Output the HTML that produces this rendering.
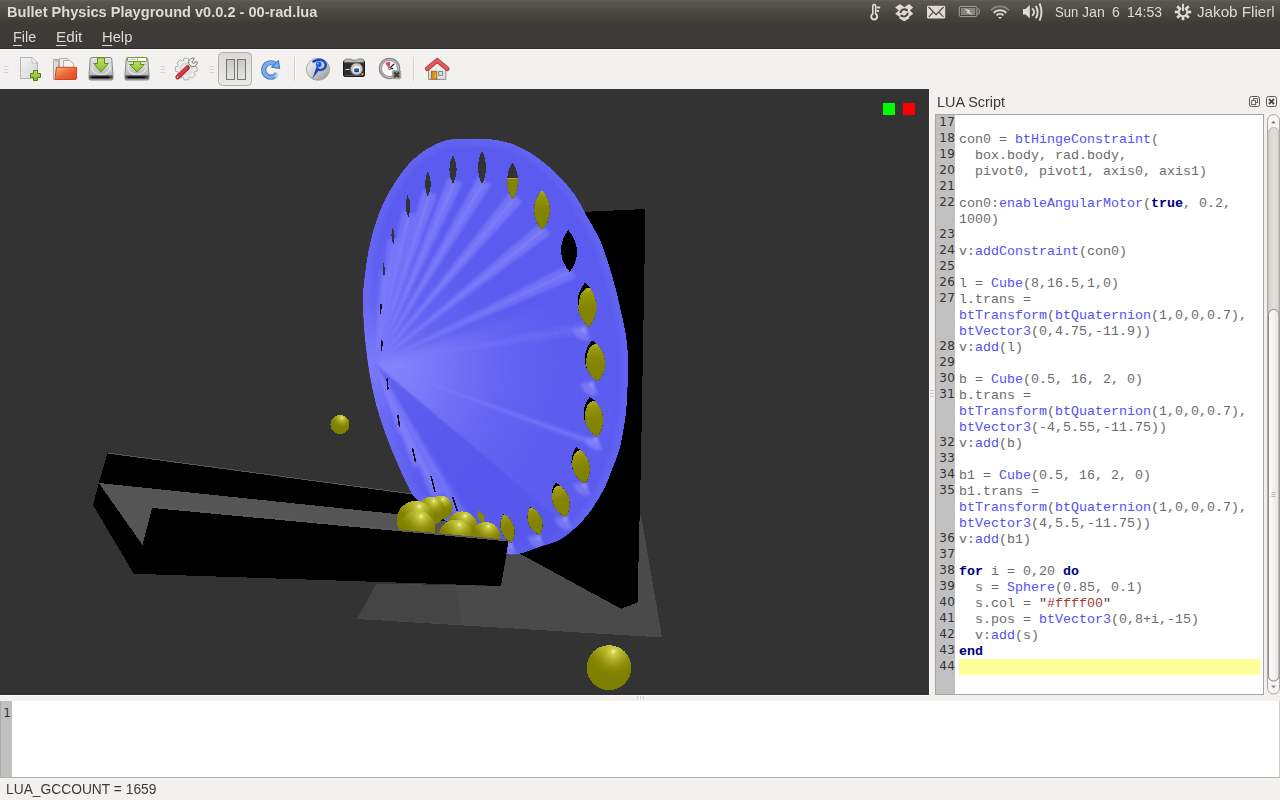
<!DOCTYPE html>
<html lang="en">
<head>
<meta charset="utf-8">
<title>Bullet Physics Playground v0.0.2 - 00-rad.lua</title>
<style>
*{box-sizing:border-box;margin:0;padding:0}
html,body{width:1280px;height:800px;overflow:hidden;background:#f2f1f0;font-family:"Liberation Sans","DejaVu Sans",sans-serif;}
.abs{position:absolute}
#titlebar{position:absolute;left:0;top:0;width:1280px;height:24px;background:linear-gradient(#646157 0px,#5a574e 1.5px,#54514a 6px,#4b4943 12px,#43423d 18px,#3d3c38 23px,#3c3b37 24px);}
#menubar{position:absolute;left:0;top:24px;width:1280px;height:25px;background:#3c3b37;}
#toolbar{position:absolute;left:0;top:48px;width:1280px;height:41px;background:linear-gradient(#2f2e2b 0,#2f2e2b 1px,#fcfcfb 1px,#fcfcfb 2px,#f2f1f0 2px);}
.ttl{position:absolute;white-space:nowrap;color:#dfdbd2;transform-origin:0 0;}
#view{position:absolute;left:0;top:89px;width:929px;height:606px;background:#333;overflow:hidden}
#dock{position:absolute;left:929px;top:89px;width:351px;height:606px;background:#f2f1f0;}
#editor{position:absolute;left:935px;top:114px;width:329px;height:581px;border:1px solid #a9a6a0;background:#fff;overflow:hidden}
#gutter{position:absolute;left:0;top:0;width:19px;height:100%;background:#c0c0c0}
#console{position:absolute;left:0;top:700px;width:1280px;height:78px;background:#fff;border-top:1px solid #f2f1f0;border-bottom:1px solid #b4b1ab;border-right:1px solid #cfccc6}
#cgutter{position:absolute;left:0;top:0;width:12px;height:76px;background:#c0c0c0;border-left:1px solid #aeaba6}
#status{position:absolute;left:0;top:778px;width:1280px;height:22px;background:#f2f1f0}

#code{position:absolute;left:0;top:0;width:327px}
.row{position:relative;height:16px;line-height:16px;white-space:pre;font-family:"Liberation Mono","DejaVu Sans Mono",monospace;font-size:13.333px;color:#6a6a6a}
.row .ln{position:absolute;left:0;top:-1px;width:19.5px;letter-spacing:0.5px;text-align:right;font-family:"DejaVu Sans","Liberation Sans",sans-serif;font-size:12px;color:#333;line-height:16px}
.row .cd{position:absolute;left:23px;top:1px}
.row.cur::after{content:"";position:absolute;left:23px;top:0;width:301px;height:16px;background:#ffff99}
.f{color:#5252f2}
.k{color:#00007f;font-weight:bold}
.s{color:#a03838}
.q{color:#444}
.tx{position:absolute;white-space:pre;transform-origin:0 0;font-family:"Liberation Sans","DejaVu Sans",sans-serif}
.tx u{text-decoration:none;border-bottom:1px solid currentColor;padding-bottom:0px}
</style>
</head>
<body>
<div id="titlebar"><!--TI--><svg id="tisvg" width="1280" height="24" viewBox="0 0 1280 24" style="position:absolute;left:0;top:0">
<path d="M872,6 a2.2,2.2 0 0 1 4.4,0 V13.2 a4,4 0 1 1 -4.4,0Z" fill="#dfdbd2"/>
<path d="M873.6,6.2 a0.6,0.6 0 0 1 1.2,0 V14.6 a2,2 0 1 1 -1.2,0Z" fill="#45443f"/>
<circle cx="874.2" cy="16.6" r="1.1" fill="#dfdbd2" opacity="0"/>
<rect x="876.6" y="6.5" width="3.6" height="1.9" fill="#dfdbd2"/><rect x="876.6" y="10" width="2.4" height="1.9" fill="#dfdbd2"/>
<path d="M899.9,4 L904.4,7.3 L909,4 L913.3,7.4 L909.8,10.5 L913.3,13.7 L909.2,16.8 V18.4 L904.2,21.2 L899.4,18.4 V16.8 L895.2,13.7 L898.8,10.5 L895.2,7.4Z" fill="#dfdbd2"/>
<path d="M900.6,13 a3.6,3.6 0 0 1 6.2,-2.6" fill="none" stroke="#45443f" stroke-width="1.9"/><path d="M907.8,8.5 l-0.2,3 l-2.8,-0.9Z" fill="#45443f"/>
<path d="M907.6,12.8 a3.6,3.6 0 0 1 -6.2,2.6" fill="none" stroke="#45443f" stroke-width="1.9"/><path d="M900.4,17.3 l0.2,-3 l2.8,0.9Z" fill="#45443f"/>
<rect x="927" y="5.8" width="18.2" height="12.6" rx="1.2" fill="#dfdbd2"/>
<path d="M928.6,7 L936.1,14.6 L943.6,7" fill="none" stroke="#45443f" stroke-width="1.1"/><path d="M928.8,17 L933.2,12.2 M943.4,17 L939,12.2" fill="none" stroke="#45443f" stroke-width="1.1"/>
<rect x="959.3" y="6.4" width="17.6" height="10.2" rx="1.5" fill="none" stroke="#a5a29a" stroke-width="1"/>
<rect x="961" y="8" width="14.2" height="7" fill="#85837c"/>
<path d="M977.4,9 h1 q0.8,0 0.8,0.8 v3.4 q0,0.8 -0.8,0.8 h-1" fill="none" stroke="#a5a29a" stroke-width="1"/>
<path d="M963.8,8.2 L970.4,10.6 L969,11.5 L973,14.8 L966.2,12.5 L967.6,11.5Z" fill="#dcd9d1"/>
<path d="M990.93,10.44 A12.2,12.2 0 0 1 1009.07,10.44" fill="none" stroke="#8d8a83" stroke-width="1.9"/>
<path d="M993.76,12.98 A8.4,8.4 0 0 1 1006.24,12.98" fill="none" stroke="#dfdbd2" stroke-width="1.9"/>
<path d="M996.51,15.46 A4.7,4.7 0 0 1 1003.49,15.46" fill="none" stroke="#dfdbd2" stroke-width="1.9"/>
<path d="M998.2,16.9 h3.6 l-1.8,2.3Z" fill="#dfdbd2"/>
<path d="M1023,9 h2.6 l4.2,-4.2 v13.8 l-4.2,-4.2 h-2.6Z" fill="#dfdbd2"/>
<path d="M1032.1999999999998,8.3 Q1036.0,12.1 1032.1999999999998,15.899999999999999" fill="none" stroke="#dfdbd2" stroke-width="1.9"/>
<path d="M1035.8,5.8999999999999995 Q1039.6000000000001,12.1 1035.8,18.3" fill="none" stroke="#dfdbd2" stroke-width="1.9"/>
<path d="M1039.6,3.5 Q1043.4,12.1 1039.6,20.7" fill="none" stroke="#dfdbd2" stroke-width="1.9"/>
<path d="M1184.77,8.19 A4.2,4.2 0 1 1 1181.23,8.19" fill="none" stroke="#dfdbd2" stroke-width="1.9"/>
<rect x="1181.65" y="3.8000000000000007" width="2.7" height="3.7" fill="#dfdbd2" transform="rotate(45 1183 12)"/>
<rect x="1181.65" y="3.8000000000000007" width="2.7" height="3.7" fill="#dfdbd2" transform="rotate(90 1183 12)"/>
<rect x="1181.65" y="3.8000000000000007" width="2.7" height="3.7" fill="#dfdbd2" transform="rotate(135 1183 12)"/>
<rect x="1181.65" y="3.8000000000000007" width="2.7" height="3.7" fill="#dfdbd2" transform="rotate(180 1183 12)"/>
<rect x="1181.65" y="3.8000000000000007" width="2.7" height="3.7" fill="#dfdbd2" transform="rotate(225 1183 12)"/>
<rect x="1181.65" y="3.8000000000000007" width="2.7" height="3.7" fill="#dfdbd2" transform="rotate(270 1183 12)"/>
<rect x="1181.65" y="3.8000000000000007" width="2.7" height="3.7" fill="#dfdbd2" transform="rotate(315 1183 12)"/>
<rect x="1182.05" y="3.8" width="1.9" height="7.4" fill="#dfdbd2"/>
</svg><!--/TI-->
</div>
<div id="menubar">
</div>
<div id="toolbar"><!--TB--><svg id="tbsvg" width="1280" height="41" viewBox="0 48 1280 41" style="position:absolute;left:0;top:0">
<defs>
<linearGradient id="gpaper" x1="0" y1="0" x2="1" y2="1"><stop offset="0" stop-color="#f4f4f4"/><stop offset="1" stop-color="#d4d4d4"/></linearGradient>
<linearGradient id="gplus" x1="0" y1="0" x2="0" y2="1"><stop offset="0" stop-color="#b5dc5a"/><stop offset="1" stop-color="#7fb421"/></linearGradient>
<linearGradient id="gfold" x1="0" y1="0" x2="1" y2="1"><stop offset="0" stop-color="#f7b27a"/><stop offset="0.5" stop-color="#ee6a3a"/><stop offset="1" stop-color="#e2411a"/></linearGradient>
<linearGradient id="gdrv" x1="0" y1="0" x2="0" y2="1"><stop offset="0" stop-color="#e4e4e4"/><stop offset="0.6" stop-color="#c6c6c6"/><stop offset="1" stop-color="#a8a8a8"/></linearGradient>
<linearGradient id="gdrvb" x1="0" y1="0" x2="0" y2="1"><stop offset="0" stop-color="#555"/><stop offset="0.45" stop-color="#3a3a3a"/><stop offset="1" stop-color="#8c8c8c"/></linearGradient>
<linearGradient id="garr" x1="0" y1="0" x2="0" y2="1"><stop offset="0" stop-color="#c3e36a"/><stop offset="1" stop-color="#86bc25"/></linearGradient>
<linearGradient id="gbtn" x1="0" y1="0" x2="0" y2="1"><stop offset="0" stop-color="#dcd9d4"/><stop offset="1" stop-color="#eceae7"/></linearGradient>
<linearGradient id="gbar" x1="0" y1="0" x2="0" y2="1"><stop offset="0" stop-color="#c4c6c0"/><stop offset="1" stop-color="#e6e7e2"/></linearGradient>
<linearGradient id="gpov" x1="0" y1="0" x2="1" y2="1"><stop offset="0" stop-color="#f4f4f4"/><stop offset="0.5" stop-color="#cfcfcf"/><stop offset="1" stop-color="#8c8c8c"/></linearGradient>
<linearGradient id="groof" x1="0" y1="0" x2="0" y2="1"><stop offset="0" stop-color="#e46a6a"/><stop offset="1" stop-color="#c22f2f"/></linearGradient>
<linearGradient id="gwr" x1="0" y1="0" x2="1" y2="1"><stop offset="0" stop-color="#ee5a5a"/><stop offset="1" stop-color="#c41e1e"/></linearGradient>
<radialGradient id="ggear" cx="0.5" cy="0.5" r="0.5"><stop offset="0" stop-color="#bdbdbd"/><stop offset="0.45" stop-color="#c8c8c8"/><stop offset="0.5" stop-color="#ececec"/><stop offset="1" stop-color="#dcdcdc"/></radialGradient>
</defs>
<rect x="4" y="66" width="4.4" height="1" fill="#d9d5cf"/><rect x="4" y="69" width="4.4" height="1" fill="#d9d5cf"/><rect x="4" y="72" width="4.4" height="1" fill="#d9d5cf"/>
<rect x="160.5" y="66" width="4.4" height="1" fill="#d9d5cf"/><rect x="160.5" y="69" width="4.4" height="1" fill="#d9d5cf"/><rect x="160.5" y="72" width="4.4" height="1" fill="#d9d5cf"/>
<rect x="209.5" y="66" width="4.4" height="1" fill="#d9d5cf"/><rect x="209.5" y="69" width="4.4" height="1" fill="#d9d5cf"/><rect x="209.5" y="72" width="4.4" height="1" fill="#d9d5cf"/>
<path d="M20.5,57.5H32L37.5,63V78.5H20.5Z" fill="url(#gpaper)" stroke="#b4b4b4" stroke-width="1"/>
<path d="M32,57.5V63H37.5Z" fill="#fafafa" stroke="#b4b4b4" stroke-width="0.8"/>
<path d="M33.5,70.5h4v3h3v4h-3v3h-4v-3h-3v-4h3Z" fill="url(#gplus)" stroke="#4f7f10" stroke-width="1" stroke-linejoin="round"/>
<path d="M53.5,59.5H58.5V79.5H53.5Z" fill="#dcdcdc" stroke="#aaa" stroke-width="1"/>
<rect x="55" y="60.3" width="3" height="1" fill="#f0a050"/>
<path d="M59.5,58.5H67L71.5,62.5V76H59.5Z" fill="#ececec" stroke="#b0b0b0" stroke-width="1"/>
<path d="M63.5,60.5H70L73.5,64V76H63.5Z" fill="#f4f4f4" stroke="#b0b0b0" stroke-width="1"/>
<path d="M56.5,67.3H76.5V78Q76.5,79.5 75,79.5H55Q55.5,74 56.5,67.3Z" fill="url(#gfold)" stroke="#d8431c" stroke-width="1" stroke-linejoin="round"/>
<path d="M92,57.5H110Q111.5,57.5 111.8,59L113,75V78.5Q113,80 111.5,80H90.5Q89,80 89,78.5V75L90.2,59Q90.5,57.5 92,57.5Z" fill="url(#gdrv)" stroke="#8c8c8c" stroke-width="1"/><ellipse cx="101" cy="68" rx="9" ry="6.5" fill="none" stroke="#e9e9e9" stroke-width="1.2" opacity="0.9"/><path d="M89.5,75.3H112.5V78.3Q112.5,79.5 111.3,79.5H90.7Q89.5,79.5 89.5,78.3Z" fill="url(#gdrvb)"/><rect x="91.8" y="76.4" width="17.6" height="1.9" rx="0.9" fill="#0a0a0a"/>
<path d="M97.5,58H104.5V63.5H108.3L101,71.8L93.7,63.5H97.5Z" fill="url(#garr)" stroke="#5b8f12" stroke-width="1" stroke-linejoin="round"/>
<path d="M128,57.5H146Q147.5,57.5 147.8,59L149,75V78.5Q149,80 147.5,80H126.5Q125,80 125,78.5V75L126.2,59Q126.5,57.5 128,57.5Z" fill="url(#gdrv)" stroke="#8c8c8c" stroke-width="1"/><ellipse cx="137" cy="68" rx="9" ry="6.5" fill="none" stroke="#e9e9e9" stroke-width="1.2" opacity="0.9"/><path d="M125.5,75.3H148.5V78.3Q148.5,79.5 147.3,79.5H126.7Q125.5,79.5 125.5,78.3Z" fill="url(#gdrvb)"/><rect x="127.8" y="76.4" width="17.6" height="1.9" rx="0.9" fill="#0a0a0a"/>
<path d="M133.5,61H140.5V64.5H144.3L137,71.8L129.7,64.5H133.5Z" fill="url(#garr)" stroke="#5b8f12" stroke-width="1" stroke-linejoin="round"/>
<rect x="127.5" y="57.5" width="19" height="4" rx="1" fill="#fff" stroke="#6a9c1c" stroke-width="1"/>
<rect x="129.5" y="59" width="6" height="1" fill="#bbb"/><rect x="137" y="58.5" width="1" height="2" fill="#888"/>
<polygon points="197.0,66.8 197.0,71.2 194.4,71.8 194.0,72.8 195.4,75.1 192.3,78.2 190.0,76.8 189.0,77.2 188.4,79.8 184.0,79.8 183.4,77.2 182.4,76.8 180.1,78.2 177.0,75.1 178.4,72.8 178.0,71.8 175.4,71.2 175.4,66.8 178.0,66.2 178.4,65.2 177.0,62.9 180.1,59.8 182.4,61.2 183.4,60.8 184.0,58.2 188.4,58.2 189.0,60.8 190.0,61.2 192.3,59.8 195.4,62.9 194.0,65.2 194.4,66.2" fill="#eeeeee" stroke="#a9a9a9" stroke-width="0.9" stroke-linejoin="round"/>
<circle cx="186.2" cy="69" r="6.2" fill="#e2e2e4" stroke="#cfcfcf" stroke-width="0.8"/><circle cx="186.2" cy="69" r="3.4" fill="#f2f2f2" stroke="#d6d6d6" stroke-width="0.6"/>
<path d="M187.4,67.8 L190.8,64.5" stroke="#7e7e7e" stroke-width="2.8"/><path d="M187.4,67.8 L190.8,64.5" stroke="#ececec" stroke-width="1.5"/>
<path d="M3.52,-2.47 A4.3,4.3 0 1 0 3.52,2.47 L3.3,1.5 L0.8,1.5 A1.5,1.5 0 0 1 0.8,-1.5 L3.3,-1.5 Z" fill="#f1f1f1" stroke="#757575" stroke-width="0.9" stroke-linejoin="round" transform="translate(193,62.3) rotate(-42)"/>
<path d="M177.7,77.1 L187.4,67.8" stroke="#a31a26" stroke-width="4.6" stroke-linecap="round"/>
<path d="M177.6,76.9 L187.2,67.7" stroke="#e03c3c" stroke-width="2.8" stroke-linecap="round"/>
<circle cx="177.5" cy="77.3" r="0.7" fill="#fbeaea"/>
<rect x="218.5" y="52.5" width="33" height="33" rx="4" fill="url(#gbtn)" stroke="#b3afa8" stroke-width="1"/>
<rect x="226.5" y="59.5" width="8" height="20" fill="url(#gbar)" stroke="#767672" stroke-width="1"/>
<rect x="237.5" y="59.5" width="8" height="20" fill="url(#gbar)" stroke="#767672" stroke-width="1"/>
<defs><radialGradient id="gfade" gradientUnits="userSpaceOnUse" cx="281.5" cy="77.5" r="7.5"><stop offset="0" stop-color="#000"/><stop offset="0.45" stop-color="#000"/><stop offset="1" stop-color="#fff"/></radialGradient><mask id="mfade" maskUnits="userSpaceOnUse" x="255" y="55" width="30" height="30"><rect x="255" y="55" width="30" height="30" fill="url(#gfade)"/></mask></defs>
<g mask="url(#mfade)"><path d="M275.6,64.5 A7.2,7.2 0 1 0 277.2,73.4" fill="none" stroke="#4180c9" stroke-width="5.2"/>
<path d="M275.6,64.5 A7.2,7.2 0 1 0 277.2,73.4" fill="none" stroke="#8ab5ea" stroke-width="3"/>
<path d="M275.6,64.5 A7.2,7.2 0 1 0 277.2,73.4" fill="none" stroke="#6fa2e0" stroke-width="1"/></g>
<path d="M278.4,60.6 L279.6,68.4 L271.6,67.2 Z" fill="#7dade6" stroke="#3f7fc8" stroke-width="1.2" stroke-linejoin="round"/>
<rect x="294.0" y="57" width="1" height="24" fill="#d3cfc9"/><rect x="295.0" y="57" width="1" height="24" fill="#fbfaf9"/>
<rect x="413.0" y="57" width="1" height="24" fill="#d3cfc9"/><rect x="414.0" y="57" width="1" height="24" fill="#fbfaf9"/>
<ellipse cx="318" cy="69.3" rx="11.6" ry="11" fill="url(#gpov)" stroke="#9a9a9a" stroke-width="0.8"/>
<path d="M313.4,61.6 Q319.5,58 324,61.4 Q327.4,65 324.4,68.4 Q321.5,70.8 318.2,69.6" fill="none" stroke="#164bc0" stroke-width="2.4" stroke-linecap="round"/>
<path d="M316.6,66.6 L319.8,69.2 L312.2,79 Z" fill="#164bc0"/>
<circle cx="318.7" cy="64.4" r="2.8" fill="#1c5ae0"/><circle cx="317.9" cy="63.5" r="1" fill="#86aef8"/>
<rect x="343.5" y="60.5" width="21" height="16" rx="1.5" fill="#2e2e2e" stroke="#1a1a1a" stroke-width="1"/>
<path d="M344,60.5 L346,59 H351 L352,60 H357 L358,59 H363 L364,60.5 V62.5 H344Z" fill="#b8b8b8" stroke="#555" stroke-width="0.6"/>
<rect x="345.5" y="69" width="4" height="1" fill="#ddd"/><rect x="345" y="75" width="18" height="1" fill="#555"/>
<circle cx="356.6" cy="69" r="6" fill="#c9c9c9" stroke="#777" stroke-width="0.8"/><circle cx="356.6" cy="69.6" r="3.8" fill="#eee"/><rect x="354.3" y="68.6" width="4.6" height="3.6" rx="1" fill="#0e2f86"/><rect x="355.3" y="69.3" width="2.4" height="1.6" fill="#3f7ae0"/>
<rect x="361.5" y="73" width="2" height="2" fill="#f0a020"/>
<circle cx="389.5" cy="68.4" r="10" fill="#ececec" stroke="#8a8a8a" stroke-width="1.5"/>
<circle cx="389.5" cy="68.4" r="8.2" fill="#fdfdfd" stroke="#9e9e9e" stroke-width="1.4"/>
<path d="M389.5,68.4 L385.2,63.4 A6.6,6.6 0 0 1 390.2,61.9Z" fill="#f0445a"/>
<path d="M389.5,68.4 L393.8,64.3" stroke="#222" stroke-width="1.3" stroke-linecap="round"/><path d="M389.5,68.4 L392.6,68.5" stroke="#222" stroke-width="1.3" stroke-linecap="round"/><circle cx="389.5" cy="68.4" r="1.2" fill="#ddd" stroke="#444" stroke-width="0.7"/>
<rect x="392.4" y="70.6" width="8.4" height="8.2" rx="1" fill="#8c8c88" stroke="#a8a8a4" stroke-width="0.8"/>
<path d="M394.3,72.5 L398.9,77 M398.9,72.5 L394.3,77" stroke="#3c3c3a" stroke-width="2"/>
<defs><linearGradient id="gwall" x1="0" y1="0" x2="0" y2="1"><stop offset="0" stop-color="#fafafa"/><stop offset="1" stop-color="#dcdcda"/></linearGradient><linearGradient id="gdoor" x1="0" y1="0" x2="1" y2="0"><stop offset="0" stop-color="#c98a1c"/><stop offset="1" stop-color="#e2a634"/></linearGradient></defs>
<path d="M428.6,79.4 V66.8 L437.2,58.6 L445.8,66.8 V79.4Z" fill="url(#gwall)" stroke="#8a8a88" stroke-width="1"/>
<path d="M427.2,68.8 L437.2,60.4 L447.2,68.8" fill="none" stroke="#b93434" stroke-width="4.6" stroke-linecap="round" stroke-linejoin="miter"/>
<path d="M427.3,68.6 L437.2,60.3 L447.1,68.6" fill="none" stroke="#d96060" stroke-width="2.8" stroke-linecap="round" stroke-linejoin="miter"/>
<rect x="431.4" y="71.3" width="5.4" height="7.8" fill="url(#gdoor)" stroke="#a36c10" stroke-width="0.9"/><circle cx="435.6" cy="76.6" r="0.5" fill="#ffe680"/>
<rect x="438.7" y="71.5" width="3.8" height="3.8" fill="#cfe5ec" stroke="#858583" stroke-width="1"/>
</svg><!--/TB--></div>
<div id="view"><!--SCENE--><svg id="scene" width="929" height="606" viewBox="0 89 929 606" style="position:absolute;left:0;top:0" shape-rendering="crispEdges">
<defs>
<radialGradient id="gball" cx="0.6" cy="0.14" r="0.62"><stop offset="0" stop-color="#ffffe6"/><stop offset="0.05" stop-color="#fafaa0"/><stop offset="0.11" stop-color="#d6d64e"/><stop offset="0.3" stop-color="#b0b02a"/><stop offset="0.55" stop-color="#92920e"/><stop offset="0.78" stop-color="#828200"/><stop offset="1" stop-color="#808000"/></radialGradient>
<linearGradient id="gyb" x1="0" y1="0" x2="0" y2="1"><stop offset="0" stop-color="#b0b024"/><stop offset="0.12" stop-color="#96960c"/><stop offset="0.4" stop-color="#848402"/><stop offset="1" stop-color="#808000"/></linearGradient>
<linearGradient id="gballtop" x1="0" y1="0" x2="0" y2="1"><stop offset="0" stop-color="#c8c840" stop-opacity="0.55"/><stop offset="0.32" stop-color="#a0a020" stop-opacity="0"/></linearGradient>
<radialGradient id="gwedge" gradientUnits="userSpaceOnUse" cx="375" cy="364" r="275"><stop offset="0" stop-color="#8a8afe" stop-opacity="0.95"/><stop offset="0.2" stop-color="#7e7efb" stop-opacity="0.8"/><stop offset="0.45" stop-color="#7070f7" stop-opacity="0.45"/><stop offset="0.75" stop-color="#6464f2" stop-opacity="0.1"/><stop offset="1" stop-color="#6060f0" stop-opacity="0"/></radialGradient>
<radialGradient id="gfan" gradientUnits="userSpaceOnUse" cx="375" cy="364" r="150"><stop offset="0" stop-color="#8a8aff" stop-opacity="0.8"/><stop offset="0.4" stop-color="#7878fa" stop-opacity="0.35"/><stop offset="1" stop-color="#6868f4" stop-opacity="0"/></radialGradient>
<clipPath id="cdisc"><path d="M470.0,139.0C477.5,138.9 485.0,138.5 492.5,139.5C500.0,140.5 507.5,142.0 515.0,145.0C522.5,148.0 530.4,152.5 537.5,157.5C544.6,162.5 551.2,168.8 557.5,175.0C563.8,181.2 570.0,187.9 575.0,195.0C580.0,202.1 583.3,210.0 587.5,217.5C591.7,225.0 596.5,232.1 600.0,240.0C603.5,247.9 606.1,256.7 608.8,265.0C611.4,273.3 614.0,282.2 616.0,290.0C618.0,297.8 619.5,305.3 621.0,312.0C622.5,318.7 623.9,323.7 625.0,330.0C626.1,336.3 627.0,343.3 627.5,350.0C628.0,356.7 628.0,363.8 628.0,370.0C628.0,376.2 627.8,380.4 627.5,387.5C627.2,394.6 626.7,405.4 626.0,412.5C625.3,419.6 624.2,424.6 623.3,430.0C622.4,435.4 621.6,440.3 620.5,445.0C619.4,449.7 618.0,453.7 616.5,458.0C615.0,462.3 613.4,465.9 611.5,470.7C609.6,475.5 608.0,481.1 605.0,487.0C602.0,492.9 597.8,500.4 593.7,506.4C589.7,512.4 586.1,517.3 580.7,522.7C575.3,528.1 567.9,535.0 561.1,539.0C554.3,543.0 546.9,544.2 540.0,546.6C533.1,549.0 525.8,552.4 520.0,553.5C514.2,554.6 511.7,554.9 505.0,553.5C498.3,552.1 488.3,549.2 480.0,545.0C471.7,540.8 463.0,533.8 455.0,528.0C447.0,522.2 438.7,515.1 432.0,510.0C425.3,504.9 419.1,501.7 415.0,497.5C410.9,493.3 410.5,491.2 407.3,485.0C404.1,478.8 399.6,468.3 396.0,460.0C392.4,451.7 389.3,444.2 386.0,435.0C382.7,425.8 379.1,415.4 376.3,405.0C373.6,394.6 371.4,383.8 369.5,372.5C367.6,361.2 366.1,349.6 365.0,337.5C363.9,325.4 363.0,310.4 363.0,300.0C363.0,289.6 364.0,283.3 365.0,275.0C366.0,266.7 367.1,258.3 368.8,250.0C370.4,241.7 372.5,232.9 375.0,225.0C377.5,217.1 380.4,209.6 383.8,202.5C387.1,195.4 390.6,189.2 395.0,182.5C399.4,175.8 404.6,168.1 410.0,162.5C415.4,156.9 421.2,152.5 427.5,148.8C433.8,145.0 440.4,141.6 447.5,140.0C454.6,138.4 462.5,139.1 470.0,139.0Z"/></clipPath>
<filter id="b1" x="-30%" y="-30%" width="160%" height="160%"><feGaussianBlur stdDeviation="1"/></filter>
<filter id="b15" x="-30%" y="-30%" width="160%" height="160%"><feGaussianBlur stdDeviation="1.6"/></filter>
<filter id="b2" x="-30%" y="-30%" width="160%" height="160%"><feGaussianBlur stdDeviation="2.2"/></filter>
<filter id="b4" x="-30%" y="-30%" width="160%" height="160%"><feGaussianBlur stdDeviation="4"/></filter>
<clipPath id="ch0"><path transform="translate(383.75,270) rotate(-3)" d="M0,-7.0A22.8,22.8 0 0 1 0,7.0A22.8,22.8 0 0 1 0,-7.0Z"/></clipPath>
<clipPath id="ch1"><path transform="translate(393,236) rotate(-3)" d="M0,-8.5A24.8,24.8 0 0 1 0,8.5A24.8,24.8 0 0 1 0,-8.5Z"/></clipPath>
<clipPath id="ch2"><path transform="translate(408,206) rotate(-2)" d="M0,-11.0A28.0,28.0 0 0 1 0,11.0A28.0,28.0 0 0 1 0,-11.0Z"/></clipPath>
<clipPath id="ch3"><path transform="translate(428,184) rotate(0)" d="M0,-13.0A32.1,32.1 0 0 1 0,13.0A32.1,32.1 0 0 1 0,-13.0Z"/></clipPath>
<clipPath id="ch4"><path transform="translate(453,169.5) rotate(0)" d="M0,-14.5A31.8,31.8 0 0 1 0,14.5A31.8,31.8 0 0 1 0,-14.5Z"/></clipPath>
<clipPath id="ch5"><path transform="translate(482,167.5) rotate(0)" d="M0,-16.5A36.0,36.0 0 0 1 0,16.5A36.0,36.0 0 0 1 0,-16.5Z"/></clipPath>
<clipPath id="ch6"><path transform="translate(512.5,181) rotate(0)" d="M0,-18.5A33.9,33.9 0 0 1 0,18.5A33.9,33.9 0 0 1 0,-18.5Z"/></clipPath>
<clipPath id="ch7"><path transform="translate(542,210) rotate(0)" d="M0,-20.0A29.0,29.0 0 0 1 0,20.0A29.0,29.0 0 0 1 0,-20.0Z"/></clipPath>
<clipPath id="ch8"><path transform="translate(569,251) rotate(-2)" d="M0,-21.0A31.6,31.6 0 0 1 0,21.0A31.6,31.6 0 0 1 0,-21.0Z"/></clipPath>
<clipPath id="ch9"><path transform="translate(587,305) rotate(-5)" d="M0,-22.5A31.4,31.4 0 0 1 0,22.5A31.4,31.4 0 0 1 0,-22.5Z"/></clipPath>
<clipPath id="ch10"><path transform="translate(595,361) rotate(-8)" d="M0,-21.0A27.1,27.1 0 0 1 0,21.0A27.1,27.1 0 0 1 0,-21.0Z"/></clipPath>
<clipPath id="ch11"><path transform="translate(593.5,417) rotate(-11)" d="M0,-20.5A26.9,26.9 0 0 1 0,20.5A26.9,26.9 0 0 1 0,-20.5Z"/></clipPath>
<clipPath id="ch12"><path transform="translate(580.7,465.5) rotate(-14)" d="M0,-18.8A24.5,24.5 0 0 1 0,18.8A24.5,24.5 0 0 1 0,-18.8Z"/></clipPath>
<clipPath id="ch13"><path transform="translate(560.7,500) rotate(-17)" d="M0,-18.0A23.3,23.3 0 0 1 0,18.0A23.3,23.3 0 0 1 0,-18.0Z"/></clipPath>
<clipPath id="ch14"><path transform="translate(535,521) rotate(-18)" d="M0,-15.0A19.6,19.6 0 0 1 0,15.0A19.6,19.6 0 0 1 0,-15.0Z"/></clipPath>
<clipPath id="ch15"><path transform="translate(507.5,528.5) rotate(-15)" d="M0,-15.0A20.0,20.0 0 0 1 0,15.0A20.0,20.0 0 0 1 0,-15.0Z"/></clipPath>
</defs>
<polygon points="357,619 376.4,583.6 501,586 508,548 520,553.75 641,515 662,637.5" fill="#4a4a4a"/>
<polygon points="357,619 376.4,583.6 455,586 462.5,624.5" fill="#454545"/>
<polygon points="560,213 645.5,209 641,460 637.5,602.5 621,608.75 520,553.75 500,400" fill="#000"/>
<polygon points="107.5,453 440,497.5 508.75,540 501,586 133.75,573.75 93,505 98.75,483" fill="#000"/>
<polyline points="107.5,453 420,495" fill="none" stroke="#585858" stroke-width="1"/>
<polygon points="98.75,483 420,516.5 500,532 508.75,540 152.5,506.25 142.5,545" fill="#555"/>
<path d="M470.0,139.0C477.5,138.9 485.0,138.5 492.5,139.5C500.0,140.5 507.5,142.0 515.0,145.0C522.5,148.0 530.4,152.5 537.5,157.5C544.6,162.5 551.2,168.8 557.5,175.0C563.8,181.2 570.0,187.9 575.0,195.0C580.0,202.1 583.3,210.0 587.5,217.5C591.7,225.0 596.5,232.1 600.0,240.0C603.5,247.9 606.1,256.7 608.8,265.0C611.4,273.3 614.0,282.2 616.0,290.0C618.0,297.8 619.5,305.3 621.0,312.0C622.5,318.7 623.9,323.7 625.0,330.0C626.1,336.3 627.0,343.3 627.5,350.0C628.0,356.7 628.0,363.8 628.0,370.0C628.0,376.2 627.8,380.4 627.5,387.5C627.2,394.6 626.7,405.4 626.0,412.5C625.3,419.6 624.2,424.6 623.3,430.0C622.4,435.4 621.6,440.3 620.5,445.0C619.4,449.7 618.0,453.7 616.5,458.0C615.0,462.3 613.4,465.9 611.5,470.7C609.6,475.5 608.0,481.1 605.0,487.0C602.0,492.9 597.8,500.4 593.7,506.4C589.7,512.4 586.1,517.3 580.7,522.7C575.3,528.1 567.9,535.0 561.1,539.0C554.3,543.0 546.9,544.2 540.0,546.6C533.1,549.0 525.8,552.4 520.0,553.5C514.2,554.6 511.7,554.9 505.0,553.5C498.3,552.1 488.3,549.2 480.0,545.0C471.7,540.8 463.0,533.8 455.0,528.0C447.0,522.2 438.7,515.1 432.0,510.0C425.3,504.9 419.1,501.7 415.0,497.5C410.9,493.3 410.5,491.2 407.3,485.0C404.1,478.8 399.6,468.3 396.0,460.0C392.4,451.7 389.3,444.2 386.0,435.0C382.7,425.8 379.1,415.4 376.3,405.0C373.6,394.6 371.4,383.8 369.5,372.5C367.6,361.2 366.1,349.6 365.0,337.5C363.9,325.4 363.0,310.4 363.0,300.0C363.0,289.6 364.0,283.3 365.0,275.0C366.0,266.7 367.1,258.3 368.8,250.0C370.4,241.7 372.5,232.9 375.0,225.0C377.5,217.1 380.4,209.6 383.8,202.5C387.1,195.4 390.6,189.2 395.0,182.5C399.4,175.8 404.6,168.1 410.0,162.5C415.4,156.9 421.2,152.5 427.5,148.8C433.8,145.0 440.4,141.6 447.5,140.0C454.6,138.4 462.5,139.1 470.0,139.0Z" fill="#5b5bef"/>
<g clip-path="url(#cdisc)" shape-rendering="auto">
<circle cx="375" cy="364" r="150" fill="url(#gfan)"/>
<clipPath id="chalf"><polygon points="352.0,344.7 696.7,634.0 760,100 250,100"/></clipPath>
<g clip-path="url(#chalf)"><polygon points="375.0,364.0 630.3,276.1 658.4,334.2 655.7,413.5 633.3,484.4 593.3,547.2 565.7,575.8" fill="url(#gwedge)" filter="url(#b4)"/></g>
<path d="M470.0,139.0C477.5,138.9 485.0,138.5 492.5,139.5C500.0,140.5 507.5,142.0 515.0,145.0C522.5,148.0 530.4,152.5 537.5,157.5C544.6,162.5 551.2,168.8 557.5,175.0C563.8,181.2 570.0,187.9 575.0,195.0C580.0,202.1 583.3,210.0 587.5,217.5C591.7,225.0 596.5,232.1 600.0,240.0C603.5,247.9 606.1,256.7 608.8,265.0C611.4,273.3 614.0,282.2 616.0,290.0C618.0,297.8 619.5,305.3 621.0,312.0C622.5,318.7 623.9,323.7 625.0,330.0C626.1,336.3 627.0,343.3 627.5,350.0C628.0,356.7 628.0,363.8 628.0,370.0C628.0,376.2 627.8,380.4 627.5,387.5C627.2,394.6 626.7,405.4 626.0,412.5C625.3,419.6 624.2,424.6 623.3,430.0C622.4,435.4 621.6,440.3 620.5,445.0C619.4,449.7 618.0,453.7 616.5,458.0C615.0,462.3 613.4,465.9 611.5,470.7C609.6,475.5 608.0,481.1 605.0,487.0C602.0,492.9 597.8,500.4 593.7,506.4C589.7,512.4 586.1,517.3 580.7,522.7C575.3,528.1 567.9,535.0 561.1,539.0C554.3,543.0 546.9,544.2 540.0,546.6C533.1,549.0 525.8,552.4 520.0,553.5C514.2,554.6 511.7,554.9 505.0,553.5C498.3,552.1 488.3,549.2 480.0,545.0C471.7,540.8 463.0,533.8 455.0,528.0C447.0,522.2 438.7,515.1 432.0,510.0C425.3,504.9 419.1,501.7 415.0,497.5C410.9,493.3 410.5,491.2 407.3,485.0C404.1,478.8 399.6,468.3 396.0,460.0C392.4,451.7 389.3,444.2 386.0,435.0C382.7,425.8 379.1,415.4 376.3,405.0C373.6,394.6 371.4,383.8 369.5,372.5C367.6,361.2 366.1,349.6 365.0,337.5C363.9,325.4 363.0,310.4 363.0,300.0C363.0,289.6 364.0,283.3 365.0,275.0C366.0,266.7 367.1,258.3 368.8,250.0C370.4,241.7 372.5,232.9 375.0,225.0C377.5,217.1 380.4,209.6 383.8,202.5C387.1,195.4 390.6,189.2 395.0,182.5C399.4,175.8 404.6,168.1 410.0,162.5C415.4,156.9 421.2,152.5 427.5,148.8C433.8,145.0 440.4,141.6 447.5,140.0C454.6,138.4 462.5,139.1 470.0,139.0Z" fill="none" stroke="#7272f8" stroke-width="14" opacity="0.35" filter="url(#b2)"/>
<polygon points="375.0,364.0 584.1,542.6 549.0,557.2 497.5,552.7" fill="#5555ec" opacity="0.6" filter="url(#b1)"/>
<polygon points="375,364 390.0,271.6 379.1,270.5" fill="#8080fd" opacity="0.44" filter="url(#b15)"/>
<polygon points="375,364 385.1,276.1 382.9,275.9" fill="#9c9cff" opacity="0.28" filter="url(#b1)"/>
<polygon points="375,364 401.2,240.1 387.3,238.0" fill="#8080fd" opacity="0.52" filter="url(#b15)"/>
<polygon points="375,364 394.6,244.2 392.4,243.8" fill="#9c9cff" opacity="0.33" filter="url(#b1)"/>
<polygon points="375,364 417.3,213.9 401.9,210.4" fill="#8080fd" opacity="0.60" filter="url(#b15)"/>
<polygon points="375,364 409.6,217.2 407.4,216.8" fill="#9c9cff" opacity="0.38" filter="url(#b1)"/>
<polygon points="375,364 437.5,194.6 422.5,189.8" fill="#8080fd" opacity="0.64" filter="url(#b15)"/>
<polygon points="375,364 429.5,197.3 427.5,196.7" fill="#9c9cff" opacity="0.40" filter="url(#b1)"/>
<polygon points="375,364 462.7,183.1 448.3,176.8" fill="#8080fd" opacity="0.68" filter="url(#b15)"/>
<polygon points="375,364 454.5,184.9 452.5,184.1" fill="#9c9cff" opacity="0.42" filter="url(#b1)"/>
<polygon points="375,364 491.3,184.7 477.8,176.7" fill="#8080fd" opacity="0.68" filter="url(#b15)"/>
<polygon points="375,364 482.9,185.6 481.1,184.4" fill="#9c9cff" opacity="0.42" filter="url(#b1)"/>
<polygon points="375,364 522.2,201.8 510.2,191.6" fill="#8080fd" opacity="0.68" filter="url(#b15)"/>
<polygon points="375,364 513.8,201.2 512.2,199.8" fill="#9c9cff" opacity="0.42" filter="url(#b1)"/>
<polygon points="375,364 550.8,234.0 541.0,221.7" fill="#8080fd" opacity="0.64" filter="url(#b15)"/>
<polygon points="375,364 542.7,231.9 541.3,230.1" fill="#9c9cff" opacity="0.40" filter="url(#b1)"/>
<polygon points="375,364 575.9,278.0 569.2,263.7" fill="#8080fd" opacity="0.56" filter="url(#b15)"/>
<polygon points="375,364 568.5,274.0 567.5,272.0" fill="#9c9cff" opacity="0.35" filter="url(#b1)"/>
<polygon points="375,364 590.0,333.4 587.9,320.9" fill="#8080fd" opacity="0.24" filter="url(#b15)"/>
<polygon points="375,364 584.2,329.1 583.8,326.9" fill="#9c9cff" opacity="0.15" filter="url(#b1)"/>
<polygon points="375,364 594.4,447.4 597.0,440.0" fill="#8080fd" opacity="0.40" filter="url(#b15)"/>
<polygon points="375,364 590.6,443.0 591.4,441.0" fill="#9c9cff" opacity="0.25" filter="url(#b1)"/>
<polygon points="375,364 388.1,397.5 392.1,395.6" fill="#8080fd" opacity="0.36" filter="url(#b15)"/>
<polygon points="375,364 387.0,392.5 389.0,391.5" fill="#9c9cff" opacity="0.23" filter="url(#b1)"/>
<polygon points="375,364 398.4,434.0 405.2,431.3" fill="#8080fd" opacity="0.48" filter="url(#b15)"/>
<polygon points="375,364 399.0,428.4 401.0,427.6" fill="#9c9cff" opacity="0.30" filter="url(#b1)"/>
<polygon points="375,364 413.3,468.6 422.6,464.7" fill="#8080fd" opacity="0.60" filter="url(#b15)"/>
<polygon points="375,364 415.0,462.4 417.0,461.6" fill="#9c9cff" opacity="0.38" filter="url(#b1)"/>
<polygon points="375,364 432.5,499.2 443.8,493.8" fill="#8080fd" opacity="0.64" filter="url(#b15)"/>
<polygon points="375,364 435.0,492.5 437.0,491.5" fill="#9c9cff" opacity="0.40" filter="url(#b1)"/>
<polygon points="375,364 455.0,519.4 465.9,513.3" fill="#8080fd" opacity="0.48" filter="url(#b15)"/>
<polygon points="375,364 457.0,512.5 459.0,511.5" fill="#9c9cff" opacity="0.30" filter="url(#b1)"/>
<polygon points="585,326.5 572,328.5 576,336.5 583,340.5 590,339.5" fill="#9292ff" opacity="0.5" filter="url(#b15)"/>
<polygon points="585,325.5 580,330.5 586,334.5" fill="#a0a0ff" opacity="0.55" filter="url(#b1)"/>
<polygon points="593,381.5 580,383.5 584,391.5 591,395.5 598,394.5" fill="#9292ff" opacity="0.5" filter="url(#b15)"/>
<polygon points="593,380.5 588,385.5 594,389.5" fill="#a0a0ff" opacity="0.55" filter="url(#b1)"/>
<polygon points="597.5,436.5 584.5,438.5 588.5,446.5 595.5,450.5 602.5,449.5" fill="#9292ff" opacity="0.5" filter="url(#b15)"/>
<polygon points="597.5,435.5 592.5,440.5 598.5,444.5" fill="#a0a0ff" opacity="0.55" filter="url(#b1)"/>
<polygon points="586,482 573,484 577,492 584,496 591,495" fill="#9292ff" opacity="0.5" filter="url(#b15)"/>
<polygon points="586,481 581,486 587,490" fill="#a0a0ff" opacity="0.55" filter="url(#b1)"/>
<polygon points="567,516 554,518 558,526 565,530 572,529" fill="#9292ff" opacity="0.5" filter="url(#b15)"/>
<polygon points="567,515 562,520 568,524" fill="#a0a0ff" opacity="0.55" filter="url(#b1)"/>
<polygon points="540,534.5 527,536.5 531,544.5 538,548.5 545,547.5" fill="#9292ff" opacity="0.5" filter="url(#b15)"/>
<polygon points="540,533.5 535,538.5 541,542.5" fill="#a0a0ff" opacity="0.55" filter="url(#b1)"/>
<polygon points="512,542 499,544 503,552 510,556 517,555" fill="#9292ff" opacity="0.5" filter="url(#b15)"/>
<polygon points="512,541 507,546 513,550" fill="#a0a0ff" opacity="0.55" filter="url(#b1)"/>
</g>
<path transform="translate(383.75,270) rotate(-3)" d="M0,-7.0A22.8,22.8 0 0 1 0,7.0A22.8,22.8 0 0 1 0,-7.0Z" fill="#333"/>
<path transform="translate(393,236) rotate(-3)" d="M0,-8.5A24.8,24.8 0 0 1 0,8.5A24.8,24.8 0 0 1 0,-8.5Z" fill="#333"/>
<path transform="translate(408,206) rotate(-2)" d="M0,-11.0A28.0,28.0 0 0 1 0,11.0A28.0,28.0 0 0 1 0,-11.0Z" fill="#333"/>
<path transform="translate(428,184) rotate(0)" d="M0,-13.0A32.1,32.1 0 0 1 0,13.0A32.1,32.1 0 0 1 0,-13.0Z" fill="#333"/>
<path transform="translate(453,169.5) rotate(0)" d="M0,-14.5A31.8,31.8 0 0 1 0,14.5A31.8,31.8 0 0 1 0,-14.5Z" fill="#333"/>
<path transform="translate(482,167.5) rotate(0)" d="M0,-16.5A36.0,36.0 0 0 1 0,16.5A36.0,36.0 0 0 1 0,-16.5Z" fill="#333"/>
<path transform="translate(512.5,181) rotate(0)" d="M0,-18.5A33.9,33.9 0 0 1 0,18.5A33.9,33.9 0 0 1 0,-18.5Z" fill="#333"/>
<path transform="translate(542,210) rotate(0)" d="M0,-20.0A29.0,29.0 0 0 1 0,20.0A29.0,29.0 0 0 1 0,-20.0Z" fill="#222"/>
<path transform="translate(569,251) rotate(-2)" d="M0,-21.0A31.6,31.6 0 0 1 0,21.0A31.6,31.6 0 0 1 0,-21.0Z" fill="#000"/>
<path transform="translate(587,305) rotate(-5)" d="M0,-22.5A31.4,31.4 0 0 1 0,22.5A31.4,31.4 0 0 1 0,-22.5Z" fill="#000"/>
<path transform="translate(595,361) rotate(-8)" d="M0,-21.0A27.1,27.1 0 0 1 0,21.0A27.1,27.1 0 0 1 0,-21.0Z" fill="#000"/>
<path transform="translate(593.5,417) rotate(-11)" d="M0,-20.5A26.9,26.9 0 0 1 0,20.5A26.9,26.9 0 0 1 0,-20.5Z" fill="#000"/>
<path transform="translate(580.7,465.5) rotate(-14)" d="M0,-18.8A24.5,24.5 0 0 1 0,18.8A24.5,24.5 0 0 1 0,-18.8Z" fill="#000"/>
<path transform="translate(560.7,500) rotate(-17)" d="M0,-18.0A23.3,23.3 0 0 1 0,18.0A23.3,23.3 0 0 1 0,-18.0Z" fill="#000"/>
<path transform="translate(535,521) rotate(-18)" d="M0,-15.0A19.6,19.6 0 0 1 0,15.0A19.6,19.6 0 0 1 0,-15.0Z" fill="#000"/>
<path transform="translate(507.5,528.5) rotate(-15)" d="M0,-15.0A20.0,20.0 0 0 1 0,15.0A20.0,20.0 0 0 1 0,-15.0Z" fill="#000"/>
<g clip-path="url(#ch6)"><rect x="500" y="177.6" width="26" height="30" fill="#848402"/><rect x="500" y="177.6" width="26" height="1.2" fill="#a8a820"/></g>
<g clip-path="url(#ch7)"><ellipse cx="543.5" cy="212.5" rx="12" ry="22" transform="rotate(0 543.5 212.5)" fill="url(#gyb)"/></g>
<g clip-path="url(#ch9)"><ellipse cx="590" cy="311" rx="11.5" ry="23" transform="rotate(-5 590 311)" fill="url(#gyb)"/></g>
<g clip-path="url(#ch10)"><ellipse cx="598" cy="366" rx="11.5" ry="22" transform="rotate(-8 598 366)" fill="url(#gyb)"/></g>
<g clip-path="url(#ch11)"><ellipse cx="596.5" cy="422" rx="11" ry="21" transform="rotate(-11 596.5 422)" fill="url(#gyb)"/></g>
<g clip-path="url(#ch12)"><ellipse cx="583.5" cy="469.5" rx="10.5" ry="19.5" transform="rotate(-14 583.5 469.5)" fill="url(#gyb)"/></g>
<g clip-path="url(#ch13)"><ellipse cx="563" cy="503.5" rx="10" ry="18.5" transform="rotate(-17 563 503.5)" fill="url(#gyb)"/></g>
<g clip-path="url(#ch14)"><ellipse cx="536" cy="522.5" rx="9" ry="16" transform="rotate(-18 536 522.5)" fill="url(#gyb)"/></g>
<g clip-path="url(#ch15)"><ellipse cx="508.5" cy="529.5" rx="9" ry="16" transform="rotate(-15 508.5 529.5)" fill="url(#gyb)"/></g>
<line x1="381.2" y1="304.0" x2="380.3" y2="314.0" stroke="#111" stroke-width="1.5"/>
<line x1="382.0" y1="340.5" x2="381.5" y2="351.5" stroke="#111" stroke-width="1.5"/>
<line x1="387.0" y1="378.5" x2="388.0" y2="389.5" stroke="#111" stroke-width="1.5"/>
<line x1="397.9" y1="415.1" x2="399.6" y2="426.9" stroke="#111" stroke-width="1.5"/>
<line x1="412.5" y1="448.2" x2="415.5" y2="461.8" stroke="#111" stroke-width="1.5"/>
<line x1="431.1" y1="476.2" x2="434.9" y2="491.8" stroke="#111" stroke-width="1.5"/>
<line x1="452.8" y1="497.3" x2="457.2" y2="510.7" stroke="#111" stroke-width="1.5"/>
<path transform="translate(481,517) rotate(-25)" d="M0,-7.0A9.7,9.7 0 0 1 0,7.0A9.7,9.7 0 0 1 0,-7.0Z" fill="#848402"/>
<circle cx="440.6" cy="507.6" r="12" fill="url(#gball)"/><circle cx="440.6" cy="507.6" r="12" fill="url(#gballtop)"/>
<circle cx="431" cy="511" r="14" fill="url(#gball)"/><circle cx="431" cy="511" r="14" fill="url(#gballtop)"/>
<circle cx="415.6" cy="520" r="19" fill="url(#gball)"/><circle cx="415.6" cy="520" r="19" fill="url(#gballtop)"/>
<circle cx="462" cy="527" r="15.6" fill="url(#gball)"/><circle cx="462" cy="527" r="15.6" fill="url(#gballtop)"/>
<circle cx="417.5" cy="529" r="18" fill="url(#gball)"/><circle cx="417.5" cy="529" r="18" fill="url(#gballtop)"/>
<circle cx="456" cy="537" r="17.5" fill="url(#gball)"/><circle cx="456" cy="537" r="17.5" fill="url(#gballtop)"/>
<circle cx="485.6" cy="536.5" r="14.5" fill="url(#gball)"/><circle cx="485.6" cy="536.5" r="14.5" fill="url(#gballtop)"/>
<polygon points="152.5,506.25 508.75,540 501,586 133.75,573.75 142.5,545" fill="#000"/>
<polygon points="98.75,483 152.5,506.25 142.5,545" fill="#555"/>
<polygon points="152.5,506.25 510,540 509.6,541.6 152.3,508" fill="#5a5a5a"/>
<circle cx="340" cy="424.5" r="9.5" fill="url(#gball)"/><circle cx="340" cy="424.5" r="9.5" fill="url(#gballtop)"/>
<circle cx="609" cy="667.6" r="22.4" fill="url(#gball)"/><circle cx="609" cy="667.6" r="22.4" fill="url(#gballtop)"/>
<rect x="883" y="103" width="12" height="12" fill="#00ff00"/><rect x="903" y="103" width="12" height="12" fill="#ff0000"/>
</svg><!--/SCENE--></div>
<div id="vhl" style="position:absolute;left:0;top:695px;width:930px;height:1px;background:#fbfbfa"></div><div id="vhr" style="position:absolute;left:929px;top:89px;width:1px;height:607px;background:#fbfbfa;z-index:2"></div>
<div id="dock"><!--DK--><svg id="docksvg" width="351" height="606" viewBox="929 89 351 606" style="position:absolute;left:0;top:0">
<defs>
<linearGradient id="gsl" x1="0" y1="0" x2="1" y2="0"><stop offset="0" stop-color="#fdfdfd"/><stop offset="0.5" stop-color="#f3f2f0"/><stop offset="1" stop-color="#e6e4e1"/></linearGradient>
<linearGradient id="gtr" x1="0" y1="0" x2="1" y2="0"><stop offset="0" stop-color="#d6d3ce"/><stop offset="0.5" stop-color="#e0deda"/><stop offset="1" stop-color="#dcd9d5"/></linearGradient>
</defs>
<rect x="1249.5" y="96.5" width="10" height="10" rx="2" fill="#f2f1f0" stroke="#5a5955" stroke-width="1"/>
<rect x="1253.6" y="98.6" width="4" height="4" fill="none" stroke="#5a5955" stroke-width="0.9"/>
<rect x="1251.6" y="100.6" width="4" height="4" fill="#f2f1f0" stroke="#5a5955" stroke-width="0.9"/>
<rect x="1266.5" y="96.5" width="10" height="10" rx="2" fill="#f2f1f0" stroke="#5a5955" stroke-width="1"/>
<path d="M1269,99 L1274,104 M1274,99 L1269,104" stroke="#4a4945" stroke-width="1.9"/>
<rect x="1267.5" y="114.5" width="12" height="579.5" rx="6" fill="#f6f5f4" stroke="#aaa69f" stroke-width="1"/>
<rect x="1268" y="127.5" width="11" height="553.5" rx="5.5" fill="url(#gtr)" stroke="#b3afa9" stroke-width="0.8"/>
<path d="M1271.3,123.2 L1273.5,121 L1275.7,123.2Z" fill="#6a6864"/>
<path d="M1271.2,685.6 L1275.8,685.6 L1273.5,688.4Z" fill="#8a8884"/>
<rect x="1268.5" y="309.5" width="10.5" height="371.5" rx="5.2" fill="url(#gsl)" stroke="#8f8c86" stroke-width="1"/>
<path d="M1271.5,492.5h4M1271.5,494.5h4M1271.5,496.5h4" stroke="#b8b5af" stroke-width="1"/>
<path d="M930,390.5h4M930,393.5h4M930,396.5h4" stroke="#cfccc6" stroke-width="1"/>
</svg><!--/DK-->
</div>
<div id="editor"><div id="gutter"></div>
<div id="code">
<div class="row"><span class="ln">17</span><span class="cd"></span></div>
<div class="row"><span class="ln">18</span><span class="cd">con0 = <span class="f">btHingeConstraint</span>(</span></div>
<div class="row"><span class="ln">19</span><span class="cd">  box.body, rad.body,</span></div>
<div class="row"><span class="ln">20</span><span class="cd">  pivot0, pivot1, axis0, axis1)</span></div>
<div class="row"><span class="ln">21</span><span class="cd"></span></div>
<div class="row"><span class="ln">22</span><span class="cd">con0:<span class="f">enableAngularMotor</span>(<span class="k">true</span>, 0.2,</span></div>
<div class="row"><span class="ln"></span><span class="cd">1000)</span></div>
<div class="row"><span class="ln">23</span><span class="cd"></span></div>
<div class="row"><span class="ln">24</span><span class="cd">v:<span class="f">addConstraint</span>(con0)</span></div>
<div class="row"><span class="ln">25</span><span class="cd"></span></div>
<div class="row"><span class="ln">26</span><span class="cd">l = <span class="f">Cube</span>(8,16.5,1,0)</span></div>
<div class="row"><span class="ln">27</span><span class="cd">l.trans =</span></div>
<div class="row"><span class="ln"></span><span class="cd"><span class="f">btTransform</span>(<span class="f">btQuaternion</span>(1,0,0,0.7),</span></div>
<div class="row"><span class="ln"></span><span class="cd"><span class="f">btVector3</span>(0,4.75,-11.9))</span></div>
<div class="row"><span class="ln">28</span><span class="cd">v:<span class="f">add</span>(l)</span></div>
<div class="row"><span class="ln">29</span><span class="cd"></span></div>
<div class="row"><span class="ln">30</span><span class="cd">b = <span class="f">Cube</span>(0.5, 16, 2, 0)</span></div>
<div class="row"><span class="ln">31</span><span class="cd">b.trans =</span></div>
<div class="row"><span class="ln"></span><span class="cd"><span class="f">btTransform</span>(<span class="f">btQuaternion</span>(1,0,0,0.7),</span></div>
<div class="row"><span class="ln"></span><span class="cd"><span class="f">btVector3</span>(-4,5.55,-11.75))</span></div>
<div class="row"><span class="ln">32</span><span class="cd">v:<span class="f">add</span>(b)</span></div>
<div class="row"><span class="ln">33</span><span class="cd"></span></div>
<div class="row"><span class="ln">34</span><span class="cd">b1 = <span class="f">Cube</span>(0.5, 16, 2, 0)</span></div>
<div class="row"><span class="ln">35</span><span class="cd">b1.trans =</span></div>
<div class="row"><span class="ln"></span><span class="cd"><span class="f">btTransform</span>(<span class="f">btQuaternion</span>(1,0,0,0.7),</span></div>
<div class="row"><span class="ln"></span><span class="cd"><span class="f">btVector3</span>(4,5.5,-11.75))</span></div>
<div class="row"><span class="ln">36</span><span class="cd">v:<span class="f">add</span>(b1)</span></div>
<div class="row"><span class="ln">37</span><span class="cd"></span></div>
<div class="row"><span class="ln">38</span><span class="cd"><span class="k">for</span> i = 0,20 <span class="k">do</span></span></div>
<div class="row"><span class="ln">39</span><span class="cd">  s = <span class="f">Sphere</span>(0.85, 0.1)</span></div>
<div class="row"><span class="ln">40</span><span class="cd">  s.col = <span class="q">"</span><span class="s">#ffff00</span><span class="q">"</span></span></div>
<div class="row"><span class="ln">41</span><span class="cd">  s.pos = <span class="f">btVector3</span>(0,8+i,-15)</span></div>
<div class="row"><span class="ln">42</span><span class="cd">  v:<span class="f">add</span>(s)</span></div>
<div class="row"><span class="ln">43</span><span class="cd"><span class="k">end</span></span></div>
<div class="row cur"><span class="ln">44</span><span class="cd"></span></div>
</div></div>
<div id="console"><div id="cgutter"></div><span id="c_ln" style="position:absolute;left:0;top:4px;width:11px;text-align:right;font-family:'DejaVu Sans','Liberation Sans',sans-serif;font-size:12px;line-height:16px;color:#333">1</span></div>
<div id="hsplit" style="position:absolute;left:637px;top:696px;width:7px;height:3px;background:linear-gradient(90deg,#cfccc6 0,#cfccc6 1px,transparent 1px,transparent 3px,#cfccc6 3px,#cfccc6 4px,transparent 4px,transparent 6px,#cfccc6 6px,#cfccc6 7px)"></div>
<div id="status">
</div>
<!--TXT--><div id="txt">
<span class="tx" id="t_title" style="left:6.6px;top:4px;font-size:14.4px;line-height:16px;font-weight:bold;color:#dfdbd2;transform:scaleX(1.0133)">Bullet Physics Playground v0.0.2 - 00-rad.lua</span>
<span class="tx" id="t_sun" style="left:1055.3px;top:4px;font-size:14.4px;line-height:16px;color:#dfdbd2;transform:scaleX(0.9101)">Sun</span>
<span class="tx" id="t_jan" style="left:1082.0px;top:4px;font-size:14.4px;line-height:16px;color:#dfdbd2;transform:scaleX(0.9828)">Jan</span>
<span class="tx" id="t_6" style="left:1111.5px;top:4px;font-size:14.4px;line-height:16px;color:#dfdbd2;transform:scaleX(0.975)">6</span>
<span class="tx" id="t_time" style="left:1126.63px;top:4px;font-size:14.4px;line-height:16px;color:#dfdbd2;transform:scaleX(0.9712)">14:53</span>
<span class="tx" id="t_user" style="left:1197.3px;top:4px;font-size:14.4px;line-height:16px;color:#dfdbd2;transform:scaleX(1.0562)">Jakob Flierl</span>
<span class="tx" id="m_file" style="left:13.1px;top:28.6px;font-size:14.4px;line-height:16px;color:#dfdbd2;transform:scaleX(1.0007)"><u>F</u>ile</span>
<span class="tx" id="m_edit" style="left:56.04px;top:28.6px;font-size:14.4px;line-height:16px;color:#dfdbd2;transform:scaleX(1.0631)"><u>E</u>dit</span>
<span class="tx" id="m_help" style="left:101.88px;top:28.6px;font-size:14.4px;line-height:16px;color:#dfdbd2;transform:scaleX(1.0247)"><u>H</u>elp</span>
<span class="tx" id="d_title" style="left:937.0px;top:94px;font-size:14.4px;line-height:16px;color:#3c3b37;transform:scaleX(1.0003)">LUA Script</span>
<span class="tx" id="s_text" style="left:5.94px;top:781px;font-size:14.4px;line-height:16px;color:#3c3b37;transform:scaleX(0.9587)">LUA_GCCOUNT = 1659</span>
</div><!--/TXT-->
</body>
</html>
